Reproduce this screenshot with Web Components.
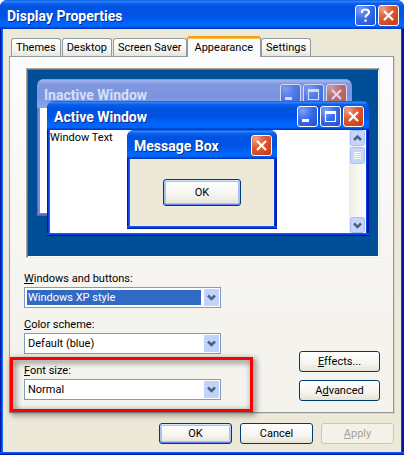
<!DOCTYPE html>
<html lang="en">
<head>
<meta charset="utf-8">
<title>Display Properties</title>
<style>
  html, body {
    margin: 0;
    min-height: 100vh;
  }

  body {
    background: #fff;
    color: #000;
    display: flex;
    flex-direction: column;
    font: 11px/16px Roboto, "Liberation Sans", sans-serif;
  }

  display-dialog {
    flex: 1;
  }
</style>
</head>
<body>
<display-dialog></display-dialog>

<script>
const GLYPHS = {
  help: '<path d="M7 8V7q0-2.500 3.500-2.500T14 7.200q0 1.300-1.500 2.300-2 1.200-2 3M10.500 14.500v2.200" stroke-width="2.200"/>',
  close: '<path d="M6 6l9 9M15 6l-9 9" stroke-width="2.200"/>',
  minimize: '<path d="M5 14.500h7" stroke-width="3"/>',
  maximize: '<path d="M5.500 6v9.500h10V6" stroke-width="1.200"/><path d="M5 6.500h11" stroke-width="3"/>'
};

class XpCaptionButton extends HTMLElement {
  constructor() {
    super();

    const icon = this.getAttribute('icon');

    // language=CSS
    this._styles = `
      :host {
        display: block;
      }

      button {
        background: radial-gradient(circle at 25% 20%, #7ea0f5 0, #3a6be8 45%, #1c4fd0 100%);
        border: 1px solid #fff;
        border-radius: 3px;
        box-sizing: border-box;
        display: block;
        height: 21px;
        padding: 0;
        width: 21px;
      }

      button.close {
        background: radial-gradient(circle at 20% 15%, #f0a088 0, #e05a34 40%, #c8380f 100%);
      }

      svg {
        display: block;
        fill: none;
        margin: -1px;
        stroke: #fff;
      }
    `
    this.attachShadow({ mode: 'open' })
    this.shadowRoot.innerHTML = `
      <style>${this._styles}</style>
      <button type="button" class="${icon}" aria-label="${icon}">
        <svg width="21" height="21" viewBox="0 0 21 21">${GLYPHS[icon]}</svg>
      </button>
    `;
  }
}

customElements.define('xp-caption-button', XpCaptionButton)

class XpWindow extends HTMLElement {
  constructor() {
    super();

    // language=CSS
    this._styles = `
      :host {
        --edge-dark: #0019a8;
        --edge: #0a3fe0;
        --edge-light: #1665f5;
        --bar: linear-gradient(#0a58d8 0, #2b86f8 5%, #0a5fec 12%, #0052e0 25%,
          #0054e6 55%, #0066ff 80%, #0064fa 91%, #0045d0 96%, #0034b8 100%);
        background: linear-gradient(90deg, var(--edge-dark) 1px, var(--edge) 1px, var(--edge) 2px, var(--edge-light) 2px,
          var(--edge-light) calc(100% - 3px), var(--edge) calc(100% - 3px),
          var(--edge) calc(100% - 2px), var(--edge-dark) calc(100% - 2px));
        border-radius: 7px 7px 0 0;
        box-sizing: border-box;
        display: flex;
        flex-direction: column;
        overflow: hidden;
      }

      :host([inactive]) {
        --edge-dark: #5d66c8;
        --edge: #7888dc;
        --edge-light: #7888dc;
        --bar: linear-gradient(#7690e4 0, #a0b4f0 6%, #8298e0 16%, #7c94e0 60%, #8ba4ec 100%);
      }

      header {
        align-items: center;
        background: var(--bar);
        box-sizing: border-box;
        display: flex;
        gap: 2px;
        height: 29px;
        padding: 2px 5px 0 7px;
      }

      h1 {
        color: #fff;
        flex: 1;
        font-size: 14px;
        font-weight: bold;
        line-height: 20px;
        margin: 0;
        text-shadow: 1px 1px #0a2a90;
        white-space: nowrap;
      }

      :host([inactive]) h1 {
        color: #d4e0fa;
        text-shadow: none;
      }

      :host([inactive]) xp-caption-button {
        opacity: 0.65;
      }

      #body {
        background: var(--window-face, #ece9d8);
        display: flex;
        flex: 1;
        flex-direction: column;
        margin: 0 var(--frame, 4px);
      }

      footer {
        background: linear-gradient(var(--edge-light), var(--edge) 50%, var(--edge-dark) 50%);
        height: var(--frame, 4px);
      }
    `
    const buttons = this.getAttribute('buttons').split(' ')
        .map(icon => `<xp-caption-button icon="${icon}"></xp-caption-button>`)
        .join('');

    this.attachShadow({ mode: 'open' })
    this.shadowRoot.innerHTML = `
      <style>${this._styles}</style>
      <header>
        <h1>${this.getAttribute('caption')}</h1>
        ${buttons}
      </header>
      <div id="body"><slot></slot></div>
      <footer></footer>
    `;
  }
}

customElements.define('xp-window', XpWindow)

class XpButton extends HTMLElement {
  constructor() {
    super();

    // language=CSS
    this._styles = `
      :host {
        display: block;
      }

      button {
        background: linear-gradient(#fff, #f5f4ee 60%, #e6e3d6);
        border: 1px solid #003c74;
        border-radius: 3px;
        box-sizing: border-box;
        color: #000;
        display: block;
        font: inherit;
        height: var(--button-height, 21px);
        line-height: 16px;
        padding: 0;
        width: 100%;
      }

      :host([default]) button {
        box-shadow: inset 0 1px #cee7ff, inset 0 -1px #6982ee, inset 0 0 0 2px #a9c2f2;
      }

      button:disabled {
        background: #f4f2e8;
        border-color: #c9c7ba;
        color: #a5a293;
      }
    `
    this.attachShadow({ mode: 'open' })
    this.shadowRoot.innerHTML = `
      <style>${this._styles}</style>
      <button type="button" ${this.hasAttribute('disabled') ? 'disabled' : ''}><slot></slot></button>
    `;
  }
}

customElements.define('xp-button', XpButton)

class XpTabs extends HTMLElement {
  constructor() {
    super();

    const selected = this.getAttribute('selected');

    // language=CSS
    this._styles = `
      :host {
        display: flex;
        flex: 1;
        flex-direction: column;
      }

      nav {
        align-items: flex-end;
        display: flex;
        gap: 1px;
        padding: 0 2px;
      }

      button {
        background: linear-gradient(#fff, #f4f3ee 70%, #e6e4da);
        border: 1px solid #919b9c;
        border-bottom: 0;
        border-radius: 3px 3px 0 0;
        box-sizing: border-box;
        color: #000;
        font: inherit;
        height: 18px;
        line-height: 16px;
        padding: 0 4px;
        white-space: nowrap;
      }

      button[aria-selected="true"] {
        background: #fcfcfe;
        border-top: 2px solid #f09a28;
        box-shadow: inset 0 1px #ffc73c;
        height: 21px;
        margin: 0 -1px -1px;
        padding: 0 7px;
        position: relative;
      }

      section {
        background: linear-gradient(#fcfcfe, #f4f3ee 75%);
        border: 1px solid #919b9c;
        box-shadow: 1px 1px #d8d5c6;
        display: flex;
        flex: 1;
        flex-direction: column;
        gap: 13px;
        padding: 11px 13px 11px 14px;
      }
    `
    const tabs = this.getAttribute('tabs').split(',')
        .map(name => `<button type="button" role="tab" aria-selected="${name === selected}">${name}</button>`)
        .join('');

    this.attachShadow({ mode: 'open' })
    this.shadowRoot.innerHTML = `
      <style>${this._styles}</style>
      <nav role="tablist">${tabs}</nav>
      <section role="tabpanel"><slot></slot></section>
    `;
  }
}

customElements.define('xp-tabs', XpTabs)

class XpSelect extends HTMLElement {
  constructor() {
    super();

    const label = this.getAttribute('label');

    // language=CSS
    this._styles = `
      :host {
        display: flex;
        flex-direction: column;
        position: relative;
      }

      :host([marked])::after {
        border: 3px solid #f00;
        bottom: -12px;
        content: "";
        filter: drop-shadow(2px 2px 3px rgba(0, 0, 0, 0.7));
        left: -14px;
        pointer-events: none;
        position: absolute;
        right: -32px;
        top: -6px;
      }

      #box {
        display: grid;
        position: relative;
      }

      select {
        appearance: none;
        background: #fff;
        border: 1px solid #7f9db9;
        border-radius: 0;
        box-sizing: border-box;
        color: #000;
        font: inherit;
        height: 21px;
        line-height: 15px;
        outline: none;
        padding: 2px 19px 2px 2px;
        text-indent: 1px;
        width: 100%;
      }

      :host([highlight]) select {
        background: linear-gradient(#316ac5, #316ac5) content-box, #fff;
        color: #fff;
      }

      option {
        background: #fff;
        color: #000;
      }

      svg {
        pointer-events: none;
        position: absolute;
        right: 2px;
        top: 2px;
      }
    `
    this.attachShadow({ mode: 'open' })
    this.shadowRoot.innerHTML = `
      <style>${this._styles}</style>
      <label for="list"><u>${label[0]}</u>${label.slice(1)}</label>
      <div id="box">
        <select id="list"><option>${this.getAttribute('value')}</option></select>
        <svg width="15" height="17" viewBox="0 0 15 17">
          <rect width="15" height="17" rx="1" fill="#c1d3fb"/>
          <path d="M4 6.500l3.500 3.500L11 6.500" fill="none" stroke="#4d6185" stroke-width="2.600"/>
        </svg>
      </div>
    `;
  }
}

customElements.define('xp-select', XpSelect)

class XpScrollbar extends HTMLElement {
  constructor() {
    super();

    // language=CSS
    this._styles = `
      :host {
        background: linear-gradient(90deg, #eeede5, #fefefb);
        display: flex;
        flex-direction: column;
        gap: 1px;
        width: 17px;
      }

      svg {
        display: block;
      }

      svg:last-child {
        margin-top: auto;
      }

      rect {
        fill: #c6d5fc;
        stroke: #a9bdf0;
      }

      path {
        fill: none;
        stroke: #4d6185;
        stroke-width: 2.5;
      }

      #grip {
        stroke: #fff;
        stroke-width: 1;
      }
    `
    this.attachShadow({ mode: 'open' })
    this.shadowRoot.innerHTML = `
      <style>${this._styles}</style>
      <svg width="17" height="16"><rect x="1.500" y="0.500" width="14" height="15" rx="2"/><path d="M5 10l3.500-3.500L12 10"/></svg>
      <svg width="17" height="17"><rect x="1.500" y="0.500" width="14" height="16" rx="2"/><path id="grip" d="M5 5.500h7M5 7.500h7M5 9.500h7M5 11.500h7"/></svg>
      <svg width="17" height="16"><rect x="1.500" y="0.500" width="14" height="15" rx="2"/><path d="M5 6.500l3.500 3.500L12 6.500"/></svg>
    `;
  }
}

customElements.define('xp-scrollbar', XpScrollbar)

/**
 * Miniature desktop showing how the chosen scheme looks
 */
class SchemePreview extends HTMLElement {
  constructor() {
    super();

    // language=CSS
    this._styles = `
      :host {
        background: #004e98;
        border: 1px solid;
        border-color: #aca899 #ece9d8 #ece9d8 #aca899;
        box-shadow: inset 1px 1px #716f64, inset -1px -1px #fff;
        box-sizing: border-box;
        display: block;
        height: 190px;
        margin-left: 2px;
        position: relative;
      }

      xp-window {
        position: absolute;
      }

      #inactive {
        --window-face: #fff;
        height: 137px;
        left: 10px;
        right: 27px;
        top: 10px;
      }

      #active {
        --window-face: #fff;
        height: 135px;
        left: 20px;
        right: 10px;
        top: 32px;
      }

      #message {
        --frame: 3px;
        height: 99px;
        left: 100px;
        top: 61px;
        width: 150px;
      }

      #text {
        display: flex;
        flex: 1;
        justify-content: space-between;
      }

      #ask {
        align-items: center;
        display: flex;
        flex: 1;
        justify-content: center;
      }

      xp-button {
        --button-height: 27px;
        width: 78px;
      }
    `
    this.attachShadow({ mode: 'open' })
    this.shadowRoot.innerHTML = `
      <style>${this._styles}</style>
      <xp-window id="inactive" inactive caption="Inactive Window" buttons="minimize maximize close"></xp-window>
      <xp-window id="active" caption="Active Window" buttons="minimize maximize close">
        <div id="text"><span>Window Text</span><xp-scrollbar></xp-scrollbar></div>
      </xp-window>
      <xp-window id="message" caption="Message Box" buttons="close">
        <div id="ask"><xp-button default>OK</xp-button></div>
      </xp-window>
    `;
  }
}

customElements.define('scheme-preview', SchemePreview)

class DisplayDialog extends HTMLElement {
  constructor() {
    super();

    // language=CSS
    this._styles = `
      :host {
        display: flex;
        flex-direction: column;
      }

      xp-window {
        --frame: 3px;
        flex: 1;
      }

      #content {
        display: flex;
        flex: 1;
        flex-direction: column;
        gap: 10px;
        padding: 7px 7px 8px 6px;
      }

      #options {
        align-items: flex-end;
        display: flex;
        justify-content: space-between;
      }

      #fields {
        display: flex;
        flex-direction: column;
        gap: 9px;
        padding-bottom: 1px;
        width: 197px;
      }

      #more {
        display: flex;
        flex-direction: column;
        gap: 8px;
        width: 81px;
      }

      #actions {
        display: flex;
        gap: 8px;
        justify-content: flex-end;
      }

      #actions xp-button {
        width: 73px;
      }
    `
    this.attachShadow({ mode: 'open' })
    this.shadowRoot.innerHTML = `
      <style>${this._styles}</style>
      <xp-window caption="Display Properties" buttons="help close">
        <div id="content">
          <xp-tabs tabs="Themes,Desktop,Screen Saver,Appearance,Settings" selected="Appearance">
            <scheme-preview></scheme-preview>
            <div id="options">
              <div id="fields">
                <xp-select label="Windows and buttons:" value="Windows XP style" highlight></xp-select>
                <xp-select label="Color scheme:" value="Default (blue)"></xp-select>
                <xp-select label="Font size:" value="Normal" marked></xp-select>
              </div>
              <div id="more">
                <xp-button><u>E</u>ffects...</xp-button>
                <xp-button>A<u>d</u>vanced</xp-button>
              </div>
            </div>
          </xp-tabs>
          <div id="actions">
            <xp-button default>OK</xp-button>
            <xp-button>Cancel</xp-button>
            <xp-button disabled><u>A</u>pply</xp-button>
          </div>
        </div>
      </xp-window>
    `;
  }
}

customElements.define('display-dialog', DisplayDialog)
</script>
</body>
</html>
